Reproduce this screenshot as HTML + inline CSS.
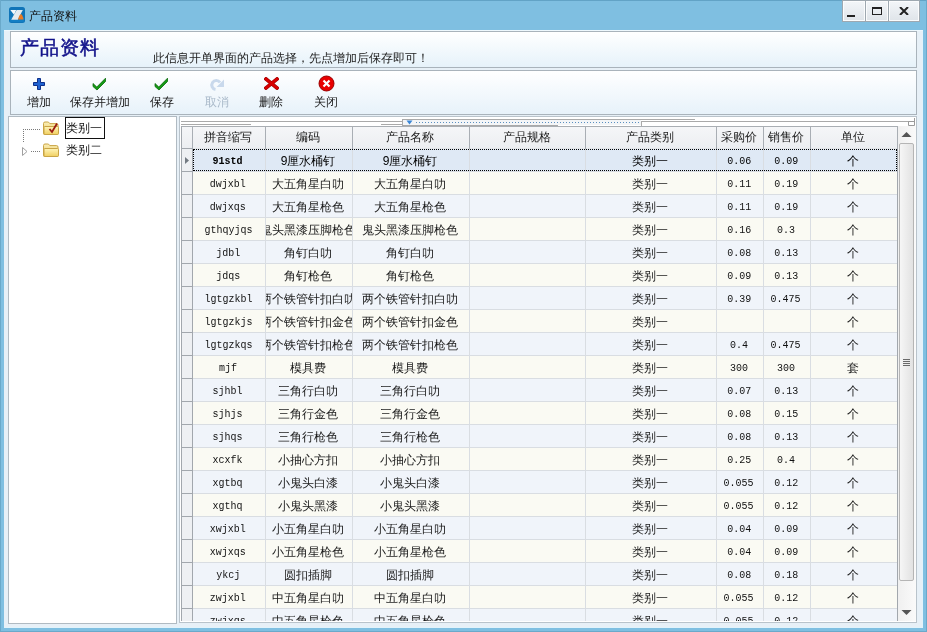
<!DOCTYPE html>
<html><head><meta charset="utf-8">
<style>
*{margin:0;padding:0;box-sizing:border-box}
html,body{width:927px;height:632px;overflow:hidden}
body{position:relative;background:#7fbfe1;font-family:"Liberation Sans",sans-serif;font-size:12px;color:#222}
.a{position:absolute}
#frame-top{left:0;top:0;width:927px;height:1px;background:#62a3c6}
#frame-left{left:0;top:0;width:1px;height:632px;background:#6aa9ca}
#client{left:4px;top:30px;width:919px;height:598px;background:#e7f0f7;box-shadow:inset 0 1px 0 #eef8fd, inset -1px -1px 0 #e2f3fb}
.panel{border:1px solid #a9b3bb}
#hdr{left:10px;top:31px;width:907px;height:37px;background:linear-gradient(#ffffff,#e6f2fa)}
#tb{left:10px;top:70px;width:907px;height:45px;background:linear-gradient(#ffffff,#e7f2fa)}
#tree{left:8px;top:116px;width:169px;height:508px;background:#fff;border-color:#b0bac2}
#gridp{left:179px;top:116px;width:738px;height:507px;background:#fff;border-color:#b9c3cb}
.tbtn{position:absolute;top:96px;font-size:12px;color:#1a1a1a;white-space:nowrap;line-height:12px}
.wbtn{position:absolute;top:1px;height:20px;background:linear-gradient(#f3f6f9,#dfe4e9);box-shadow:inset 0 0 0 1px #fbfcfd}

.hd{background:linear-gradient(#f5f6f8,#eceef1);border-top:1px solid #a9aeb3;border-bottom:1px solid #e2e5e8}
.ht{text-align:center;font-size:12px;line-height:14px;color:#1a1a1a;white-space:nowrap}
.cc{display:flex;justify-content:center;font-size:12px;line-height:14px;color:#1a1a1a;white-space:nowrap;overflow:hidden}
.cm{display:flex;justify-content:center;font-family:"Liberation Mono",monospace;font-size:11px;line-height:14px;color:#111;white-space:nowrap}
.cm span{display:inline-block;transform:scaleX(0.909)}
.b{font-weight:bold}
.k{color:#000}
</style></head><body><div id="wrap" style="position:absolute;left:0;top:0;width:927px;height:632px;will-change:transform">
<div class="a" id="frame-top"></div>
<div class="a" id="frame-left"></div>
<div class="a" style="left:926px;top:0;width:1px;height:632px;background:#6aa9ca"></div>
<div class="a" style="left:0;top:631px;width:927px;height:1px;background:#6aa9ca"></div>
<!-- title -->
<svg class="a" style="left:9px;top:7px" width="16" height="16" viewBox="0 0 16 16">
<rect x="0" y="0" width="16" height="16" rx="2.5" fill="#0f74b8"/>
<rect x="1" y="10" width="14" height="5" rx="1" fill="#1586cc" opacity="0.6"/>
<path d="M1.3 3 H7.2 L5 7.8 Z" fill="#f4f7fa"/>
<path d="M7.6 3 H13.8 L8.8 12.8 H2.2 Z" fill="#e6ebef"/>
<path d="M9 12.6 Q10.5 7 12.2 7.2 Q13.6 7.6 14.6 12.6 Z" fill="#ec7a22"/>
</svg>
<div class="a" style="left:29px;top:9px;font-size:12px;color:#111;line-height:14px">产品资料</div>
<div class="a" style="left:842px;top:0;width:78px;height:22px;background:#9ea8b0"></div>
<div class="wbtn" style="left:843px;width:22px"></div>
<div class="wbtn" style="left:866px;width:22px"></div>
<div class="wbtn" style="left:889px;width:30px"></div>
<div class="a" style="left:847px;top:15px;width:8px;height:2px;background:#222"></div>
<div class="a" style="left:872px;top:7px;width:10px;height:8px;border:1px solid #222;border-top-width:2px"></div>
<svg class="a" style="left:899px;top:7px" width="10" height="8" viewBox="0 0 10 8"><path d="M1 0 L9 8 M9 0 L1 8" stroke="#222" stroke-width="2"/></svg>

<div class="a" id="client"></div>
<div class="a panel" id="hdr"></div>
<div class="a" style="left:20px;top:37px;font-family:'Liberation Serif',serif;font-weight:normal;-webkit-text-stroke:0.5px #12128a;font-size:19px;color:#12128a;line-height:22px;letter-spacing:1px">产品资料</div>
<div class="a" style="left:153px;top:51px;font-size:12px;color:#222;line-height:14px">此信息开单界面的产品选择，先点增加后保存即可！</div>

<div class="a panel" id="tb"></div>

<!-- toolbar icons -->
<svg class="a" style="left:33px;top:78px" width="12" height="12" viewBox="0 0 12 12">
<path d="M4.5 0.5 H7.5 V4.5 H11.5 V7.5 H7.5 V11.5 H4.5 V7.5 H0.5 V4.5 H4.5 Z" fill="#1f63d2" stroke="#0c2f8a" stroke-width="1"/>
</svg>
<svg class="a" style="left:92px;top:77px" width="15" height="14" viewBox="0 0 15 14">
<path d="M1 6.5 L4.8 10 L13.5 1.2 L13.5 4.5 L5 13 L1 9.5 Z" fill="#149a14" stroke="#0a6a0a" stroke-width="0.8"/>
</svg>
<svg class="a" style="left:154px;top:77px" width="15" height="14" viewBox="0 0 15 14">
<path d="M1 6.5 L4.8 10 L13.5 1.2 L13.5 4.5 L5 13 L1 9.5 Z" fill="#149a14" stroke="#0a6a0a" stroke-width="0.8"/>
</svg>
<svg class="a" style="left:209px;top:78px" width="16" height="13" viewBox="0 0 16 13">
<path d="M11 4.5 A4.5 4.5 0 1 0 6.5 11.5" fill="none" stroke="#c9d9ec" stroke-width="3"/>
<path d="M15 1.5 V9 H7.5 Z" fill="#c9d9ec"/>
</svg>
<svg class="a" style="left:264px;top:77px" width="15" height="13" viewBox="0 0 15 13">
<path d="M2 2 L13 11 M13 2 L2 11" stroke="#a00000" stroke-width="3.6" stroke-linecap="square"/>
<path d="M2 2 L13 11 M13 2 L2 11" stroke="#d80000" stroke-width="2.4" stroke-linecap="square"/>
</svg>
<svg class="a" style="left:318px;top:75px" width="17" height="17" viewBox="0 0 17 17">
<circle cx="8.5" cy="8.5" r="7.5" fill="#e80000" stroke="#9a0000" stroke-width="1"/>
<path d="M5.5 5.5 L11.5 11.5 M11.5 5.5 L5.5 11.5" stroke="#fff" stroke-width="2.2"/>
</svg>
<div class="tbtn" style="left:27px">增加</div>
<div class="tbtn" style="left:70px">保存并增加</div>
<div class="tbtn" style="left:150px">保存</div>
<div class="tbtn" style="left:205px;color:#a9b9c9">取消</div>
<div class="tbtn" style="left:259px">删除</div>
<div class="tbtn" style="left:314px">关闭</div>
<div class="a panel" id="tree"></div>
<div class="a panel" id="gridp"></div>
<div class="a" style="left:181px;top:126px;width:717px;height:495px;overflow:hidden">
<div class="a hd" style="left:0;top:0;width:717px;height:23px"></div>
<div class="a" style="left:0;top:0;width:1px;height:495px;background:#a2a7ad"></div>
<div class="a" style="left:1px;top:22px;width:11px;height:1px;background:#a2a7ad"></div>
<div class="a" style="left:1px;top:23px;width:11px;height:472px;background:#eef0f3"></div>
<div class="a" style="left:12px;top:23px;width:704px;height:22px;background:#dfe9f5"></div>
<div class="a" style="left:12px;top:45px;width:704px;height:1px;background:#d9dde2"></div>
<div class="a" style="left:1px;top:45px;width:11px;height:1px;background:#a2a7ad"></div>
<div class="a" style="left:12px;top:46px;width:704px;height:22px;background:#fafaf3"></div>
<div class="a" style="left:12px;top:68px;width:704px;height:1px;background:#d9dde2"></div>
<div class="a" style="left:1px;top:68px;width:11px;height:1px;background:#a2a7ad"></div>
<div class="a" style="left:12px;top:69px;width:704px;height:22px;background:#f0f4fa"></div>
<div class="a" style="left:12px;top:91px;width:704px;height:1px;background:#d9dde2"></div>
<div class="a" style="left:1px;top:91px;width:11px;height:1px;background:#a2a7ad"></div>
<div class="a" style="left:12px;top:92px;width:704px;height:22px;background:#fafaf3"></div>
<div class="a" style="left:12px;top:114px;width:704px;height:1px;background:#d9dde2"></div>
<div class="a" style="left:1px;top:114px;width:11px;height:1px;background:#a2a7ad"></div>
<div class="a" style="left:12px;top:115px;width:704px;height:22px;background:#f0f4fa"></div>
<div class="a" style="left:12px;top:137px;width:704px;height:1px;background:#d9dde2"></div>
<div class="a" style="left:1px;top:137px;width:11px;height:1px;background:#a2a7ad"></div>
<div class="a" style="left:12px;top:138px;width:704px;height:22px;background:#fafaf3"></div>
<div class="a" style="left:12px;top:160px;width:704px;height:1px;background:#d9dde2"></div>
<div class="a" style="left:1px;top:160px;width:11px;height:1px;background:#a2a7ad"></div>
<div class="a" style="left:12px;top:161px;width:704px;height:22px;background:#f0f4fa"></div>
<div class="a" style="left:12px;top:183px;width:704px;height:1px;background:#d9dde2"></div>
<div class="a" style="left:1px;top:183px;width:11px;height:1px;background:#a2a7ad"></div>
<div class="a" style="left:12px;top:184px;width:704px;height:22px;background:#fafaf3"></div>
<div class="a" style="left:12px;top:206px;width:704px;height:1px;background:#d9dde2"></div>
<div class="a" style="left:1px;top:206px;width:11px;height:1px;background:#a2a7ad"></div>
<div class="a" style="left:12px;top:207px;width:704px;height:22px;background:#f0f4fa"></div>
<div class="a" style="left:12px;top:229px;width:704px;height:1px;background:#d9dde2"></div>
<div class="a" style="left:1px;top:229px;width:11px;height:1px;background:#a2a7ad"></div>
<div class="a" style="left:12px;top:230px;width:704px;height:22px;background:#fafaf3"></div>
<div class="a" style="left:12px;top:252px;width:704px;height:1px;background:#d9dde2"></div>
<div class="a" style="left:1px;top:252px;width:11px;height:1px;background:#a2a7ad"></div>
<div class="a" style="left:12px;top:253px;width:704px;height:22px;background:#f0f4fa"></div>
<div class="a" style="left:12px;top:275px;width:704px;height:1px;background:#d9dde2"></div>
<div class="a" style="left:1px;top:275px;width:11px;height:1px;background:#a2a7ad"></div>
<div class="a" style="left:12px;top:276px;width:704px;height:22px;background:#fafaf3"></div>
<div class="a" style="left:12px;top:298px;width:704px;height:1px;background:#d9dde2"></div>
<div class="a" style="left:1px;top:298px;width:11px;height:1px;background:#a2a7ad"></div>
<div class="a" style="left:12px;top:299px;width:704px;height:22px;background:#f0f4fa"></div>
<div class="a" style="left:12px;top:321px;width:704px;height:1px;background:#d9dde2"></div>
<div class="a" style="left:1px;top:321px;width:11px;height:1px;background:#a2a7ad"></div>
<div class="a" style="left:12px;top:322px;width:704px;height:22px;background:#fafaf3"></div>
<div class="a" style="left:12px;top:344px;width:704px;height:1px;background:#d9dde2"></div>
<div class="a" style="left:1px;top:344px;width:11px;height:1px;background:#a2a7ad"></div>
<div class="a" style="left:12px;top:345px;width:704px;height:22px;background:#f0f4fa"></div>
<div class="a" style="left:12px;top:367px;width:704px;height:1px;background:#d9dde2"></div>
<div class="a" style="left:1px;top:367px;width:11px;height:1px;background:#a2a7ad"></div>
<div class="a" style="left:12px;top:368px;width:704px;height:22px;background:#fafaf3"></div>
<div class="a" style="left:12px;top:390px;width:704px;height:1px;background:#d9dde2"></div>
<div class="a" style="left:1px;top:390px;width:11px;height:1px;background:#a2a7ad"></div>
<div class="a" style="left:12px;top:391px;width:704px;height:22px;background:#f0f4fa"></div>
<div class="a" style="left:12px;top:413px;width:704px;height:1px;background:#d9dde2"></div>
<div class="a" style="left:1px;top:413px;width:11px;height:1px;background:#a2a7ad"></div>
<div class="a" style="left:12px;top:414px;width:704px;height:22px;background:#fafaf3"></div>
<div class="a" style="left:12px;top:436px;width:704px;height:1px;background:#d9dde2"></div>
<div class="a" style="left:1px;top:436px;width:11px;height:1px;background:#a2a7ad"></div>
<div class="a" style="left:12px;top:437px;width:704px;height:22px;background:#f0f4fa"></div>
<div class="a" style="left:12px;top:459px;width:704px;height:1px;background:#d9dde2"></div>
<div class="a" style="left:1px;top:459px;width:11px;height:1px;background:#a2a7ad"></div>
<div class="a" style="left:12px;top:460px;width:704px;height:22px;background:#fafaf3"></div>
<div class="a" style="left:12px;top:482px;width:704px;height:1px;background:#d9dde2"></div>
<div class="a" style="left:1px;top:482px;width:11px;height:1px;background:#a2a7ad"></div>
<div class="a" style="left:12px;top:483px;width:704px;height:22px;background:#f0f4fa"></div>
<div class="a" style="left:12px;top:505px;width:704px;height:1px;background:#d9dde2"></div>
<div class="a" style="left:1px;top:505px;width:11px;height:1px;background:#a2a7ad"></div>
<div class="a" style="left:11px;top:23px;width:1px;height:472px;background:#a2a7ad"></div>
<div class="a" style="left:11px;top:1px;width:1px;height:22px;background:#a9aeb4"></div>
<div class="a" style="left:84px;top:23px;width:1px;height:472px;background:#d9dde2"></div>
<div class="a" style="left:84px;top:1px;width:1px;height:22px;background:#a9aeb4"></div>
<div class="a" style="left:171px;top:23px;width:1px;height:472px;background:#d9dde2"></div>
<div class="a" style="left:171px;top:1px;width:1px;height:22px;background:#a9aeb4"></div>
<div class="a" style="left:288px;top:23px;width:1px;height:472px;background:#d9dde2"></div>
<div class="a" style="left:288px;top:1px;width:1px;height:22px;background:#a9aeb4"></div>
<div class="a" style="left:404px;top:23px;width:1px;height:472px;background:#d9dde2"></div>
<div class="a" style="left:404px;top:1px;width:1px;height:22px;background:#a9aeb4"></div>
<div class="a" style="left:535px;top:23px;width:1px;height:472px;background:#d9dde2"></div>
<div class="a" style="left:535px;top:1px;width:1px;height:22px;background:#a9aeb4"></div>
<div class="a" style="left:582px;top:23px;width:1px;height:472px;background:#d9dde2"></div>
<div class="a" style="left:582px;top:1px;width:1px;height:22px;background:#a9aeb4"></div>
<div class="a" style="left:629px;top:23px;width:1px;height:472px;background:#d9dde2"></div>
<div class="a" style="left:629px;top:1px;width:1px;height:22px;background:#a9aeb4"></div>
<div class="a" style="left:716px;top:23px;width:1px;height:472px;background:#a2a7ad"></div>
<div class="a" style="left:716px;top:1px;width:1px;height:22px;background:#a9aeb4"></div>
<div class="a ht" style="left:11px;top:4px;width:72px">拼音缩写</div>
<div class="a ht" style="left:84px;top:4px;width:86px">编码</div>
<div class="a ht" style="left:171px;top:4px;width:116px">产品名称</div>
<div class="a ht" style="left:288px;top:4px;width:115px">产品规格</div>
<div class="a ht" style="left:404px;top:4px;width:130px">产品类别</div>
<div class="a ht" style="left:535px;top:4px;width:46px">采购价</div>
<div class="a ht" style="left:582px;top:4px;width:46px">销售价</div>
<div class="a ht" style="left:629px;top:4px;width:86px">单位</div>
<div class="a cm k b" style="left:12px;top:28px;width:72px;padding-right:2px"><span>91std</span></div>
<div class="a cc k" style="left:85px;top:28px;width:86px;padding-right:2px"><span>9厘水桶钉</span></div>
<div class="a cc k" style="left:172px;top:28px;width:116px;padding-right:2px"><span>9厘水桶钉</span></div>
<div class="a cc k" style="left:405px;top:28px;width:130px;padding-right:2px"><span>类别一</span></div>
<div class="a cm k" style="left:536px;top:28px;width:46px;padding-right:2px"><span>0.06</span></div>
<div class="a cm k" style="left:583px;top:28px;width:46px;padding-right:2px"><span>0.09</span></div>
<div class="a cc k" style="left:630px;top:28px;width:86px;padding-right:2px"><span>个</span></div>
<div class="a cm" style="left:12px;top:51px;width:72px;padding-right:2px"><span>dwjxbl</span></div>
<div class="a cc" style="left:85px;top:51px;width:86px;padding-right:2px"><span>大五角星白叻</span></div>
<div class="a cc" style="left:172px;top:51px;width:116px;padding-right:2px"><span>大五角星白叻</span></div>
<div class="a cc" style="left:405px;top:51px;width:130px;padding-right:2px"><span>类别一</span></div>
<div class="a cm" style="left:536px;top:51px;width:46px;padding-right:2px"><span>0.11</span></div>
<div class="a cm" style="left:583px;top:51px;width:46px;padding-right:2px"><span>0.19</span></div>
<div class="a cc" style="left:630px;top:51px;width:86px;padding-right:2px"><span>个</span></div>
<div class="a cm" style="left:12px;top:74px;width:72px;padding-right:2px"><span>dwjxqs</span></div>
<div class="a cc" style="left:85px;top:74px;width:86px;padding-right:2px"><span>大五角星枪色</span></div>
<div class="a cc" style="left:172px;top:74px;width:116px;padding-right:2px"><span>大五角星枪色</span></div>
<div class="a cc" style="left:405px;top:74px;width:130px;padding-right:2px"><span>类别一</span></div>
<div class="a cm" style="left:536px;top:74px;width:46px;padding-right:2px"><span>0.11</span></div>
<div class="a cm" style="left:583px;top:74px;width:46px;padding-right:2px"><span>0.19</span></div>
<div class="a cc" style="left:630px;top:74px;width:86px;padding-right:2px"><span>个</span></div>
<div class="a cm" style="left:12px;top:97px;width:72px;padding-right:2px"><span>gthqyjqs</span></div>
<div class="a cc" style="left:85px;top:97px;width:86px;padding-right:2px"><span>鬼头黑漆压脚枪色</span></div>
<div class="a cc" style="left:172px;top:97px;width:116px;padding-right:2px"><span>鬼头黑漆压脚枪色</span></div>
<div class="a cc" style="left:405px;top:97px;width:130px;padding-right:2px"><span>类别一</span></div>
<div class="a cm" style="left:536px;top:97px;width:46px;padding-right:2px"><span>0.16</span></div>
<div class="a cm" style="left:583px;top:97px;width:46px;padding-right:2px"><span>0.3</span></div>
<div class="a cc" style="left:630px;top:97px;width:86px;padding-right:2px"><span>个</span></div>
<div class="a cm" style="left:12px;top:120px;width:72px;padding-right:2px"><span>jdbl</span></div>
<div class="a cc" style="left:85px;top:120px;width:86px;padding-right:2px"><span>角钉白叻</span></div>
<div class="a cc" style="left:172px;top:120px;width:116px;padding-right:2px"><span>角钉白叻</span></div>
<div class="a cc" style="left:405px;top:120px;width:130px;padding-right:2px"><span>类别一</span></div>
<div class="a cm" style="left:536px;top:120px;width:46px;padding-right:2px"><span>0.08</span></div>
<div class="a cm" style="left:583px;top:120px;width:46px;padding-right:2px"><span>0.13</span></div>
<div class="a cc" style="left:630px;top:120px;width:86px;padding-right:2px"><span>个</span></div>
<div class="a cm" style="left:12px;top:143px;width:72px;padding-right:2px"><span>jdqs</span></div>
<div class="a cc" style="left:85px;top:143px;width:86px;padding-right:2px"><span>角钉枪色</span></div>
<div class="a cc" style="left:172px;top:143px;width:116px;padding-right:2px"><span>角钉枪色</span></div>
<div class="a cc" style="left:405px;top:143px;width:130px;padding-right:2px"><span>类别一</span></div>
<div class="a cm" style="left:536px;top:143px;width:46px;padding-right:2px"><span>0.09</span></div>
<div class="a cm" style="left:583px;top:143px;width:46px;padding-right:2px"><span>0.13</span></div>
<div class="a cc" style="left:630px;top:143px;width:86px;padding-right:2px"><span>个</span></div>
<div class="a cm" style="left:12px;top:166px;width:72px;padding-right:2px"><span>lgtgzkbl</span></div>
<div class="a cc" style="left:85px;top:166px;width:86px;padding-right:2px"><span>两个铁管针扣白叻</span></div>
<div class="a cc" style="left:172px;top:166px;width:116px;padding-right:2px"><span>两个铁管针扣白叻</span></div>
<div class="a cc" style="left:405px;top:166px;width:130px;padding-right:2px"><span>类别一</span></div>
<div class="a cm" style="left:536px;top:166px;width:46px;padding-right:2px"><span>0.39</span></div>
<div class="a cm" style="left:583px;top:166px;width:46px;padding-right:2px"><span>0.475</span></div>
<div class="a cc" style="left:630px;top:166px;width:86px;padding-right:2px"><span>个</span></div>
<div class="a cm" style="left:12px;top:189px;width:72px;padding-right:2px"><span>lgtgzkjs</span></div>
<div class="a cc" style="left:85px;top:189px;width:86px;padding-right:2px"><span>两个铁管针扣金色</span></div>
<div class="a cc" style="left:172px;top:189px;width:116px;padding-right:2px"><span>两个铁管针扣金色</span></div>
<div class="a cc" style="left:405px;top:189px;width:130px;padding-right:2px"><span>类别一</span></div>
<div class="a cc" style="left:630px;top:189px;width:86px;padding-right:2px"><span>个</span></div>
<div class="a cm" style="left:12px;top:212px;width:72px;padding-right:2px"><span>lgtgzkqs</span></div>
<div class="a cc" style="left:85px;top:212px;width:86px;padding-right:2px"><span>两个铁管针扣枪色</span></div>
<div class="a cc" style="left:172px;top:212px;width:116px;padding-right:2px"><span>两个铁管针扣枪色</span></div>
<div class="a cc" style="left:405px;top:212px;width:130px;padding-right:2px"><span>类别一</span></div>
<div class="a cm" style="left:536px;top:212px;width:46px;padding-right:2px"><span>0.4</span></div>
<div class="a cm" style="left:583px;top:212px;width:46px;padding-right:2px"><span>0.475</span></div>
<div class="a cc" style="left:630px;top:212px;width:86px;padding-right:2px"><span>个</span></div>
<div class="a cm" style="left:12px;top:235px;width:72px;padding-right:2px"><span>mjf</span></div>
<div class="a cc" style="left:85px;top:235px;width:86px;padding-right:2px"><span>模具费</span></div>
<div class="a cc" style="left:172px;top:235px;width:116px;padding-right:2px"><span>模具费</span></div>
<div class="a cc" style="left:405px;top:235px;width:130px;padding-right:2px"><span>类别一</span></div>
<div class="a cm" style="left:536px;top:235px;width:46px;padding-right:2px"><span>300</span></div>
<div class="a cm" style="left:583px;top:235px;width:46px;padding-right:2px"><span>300</span></div>
<div class="a cc" style="left:630px;top:235px;width:86px;padding-right:2px"><span>套</span></div>
<div class="a cm" style="left:12px;top:258px;width:72px;padding-right:2px"><span>sjhbl</span></div>
<div class="a cc" style="left:85px;top:258px;width:86px;padding-right:2px"><span>三角行白叻</span></div>
<div class="a cc" style="left:172px;top:258px;width:116px;padding-right:2px"><span>三角行白叻</span></div>
<div class="a cc" style="left:405px;top:258px;width:130px;padding-right:2px"><span>类别一</span></div>
<div class="a cm" style="left:536px;top:258px;width:46px;padding-right:2px"><span>0.07</span></div>
<div class="a cm" style="left:583px;top:258px;width:46px;padding-right:2px"><span>0.13</span></div>
<div class="a cc" style="left:630px;top:258px;width:86px;padding-right:2px"><span>个</span></div>
<div class="a cm" style="left:12px;top:281px;width:72px;padding-right:2px"><span>sjhjs</span></div>
<div class="a cc" style="left:85px;top:281px;width:86px;padding-right:2px"><span>三角行金色</span></div>
<div class="a cc" style="left:172px;top:281px;width:116px;padding-right:2px"><span>三角行金色</span></div>
<div class="a cc" style="left:405px;top:281px;width:130px;padding-right:2px"><span>类别一</span></div>
<div class="a cm" style="left:536px;top:281px;width:46px;padding-right:2px"><span>0.08</span></div>
<div class="a cm" style="left:583px;top:281px;width:46px;padding-right:2px"><span>0.15</span></div>
<div class="a cc" style="left:630px;top:281px;width:86px;padding-right:2px"><span>个</span></div>
<div class="a cm" style="left:12px;top:304px;width:72px;padding-right:2px"><span>sjhqs</span></div>
<div class="a cc" style="left:85px;top:304px;width:86px;padding-right:2px"><span>三角行枪色</span></div>
<div class="a cc" style="left:172px;top:304px;width:116px;padding-right:2px"><span>三角行枪色</span></div>
<div class="a cc" style="left:405px;top:304px;width:130px;padding-right:2px"><span>类别一</span></div>
<div class="a cm" style="left:536px;top:304px;width:46px;padding-right:2px"><span>0.08</span></div>
<div class="a cm" style="left:583px;top:304px;width:46px;padding-right:2px"><span>0.13</span></div>
<div class="a cc" style="left:630px;top:304px;width:86px;padding-right:2px"><span>个</span></div>
<div class="a cm" style="left:12px;top:327px;width:72px;padding-right:2px"><span>xcxfk</span></div>
<div class="a cc" style="left:85px;top:327px;width:86px;padding-right:2px"><span>小抽心方扣</span></div>
<div class="a cc" style="left:172px;top:327px;width:116px;padding-right:2px"><span>小抽心方扣</span></div>
<div class="a cc" style="left:405px;top:327px;width:130px;padding-right:2px"><span>类别一</span></div>
<div class="a cm" style="left:536px;top:327px;width:46px;padding-right:2px"><span>0.25</span></div>
<div class="a cm" style="left:583px;top:327px;width:46px;padding-right:2px"><span>0.4</span></div>
<div class="a cc" style="left:630px;top:327px;width:86px;padding-right:2px"><span>个</span></div>
<div class="a cm" style="left:12px;top:350px;width:72px;padding-right:2px"><span>xgtbq</span></div>
<div class="a cc" style="left:85px;top:350px;width:86px;padding-right:2px"><span>小鬼头白漆</span></div>
<div class="a cc" style="left:172px;top:350px;width:116px;padding-right:2px"><span>小鬼头白漆</span></div>
<div class="a cc" style="left:405px;top:350px;width:130px;padding-right:2px"><span>类别一</span></div>
<div class="a cm" style="left:536px;top:350px;width:46px;padding-right:2px"><span>0.055</span></div>
<div class="a cm" style="left:583px;top:350px;width:46px;padding-right:2px"><span>0.12</span></div>
<div class="a cc" style="left:630px;top:350px;width:86px;padding-right:2px"><span>个</span></div>
<div class="a cm" style="left:12px;top:373px;width:72px;padding-right:2px"><span>xgthq</span></div>
<div class="a cc" style="left:85px;top:373px;width:86px;padding-right:2px"><span>小鬼头黑漆</span></div>
<div class="a cc" style="left:172px;top:373px;width:116px;padding-right:2px"><span>小鬼头黑漆</span></div>
<div class="a cc" style="left:405px;top:373px;width:130px;padding-right:2px"><span>类别一</span></div>
<div class="a cm" style="left:536px;top:373px;width:46px;padding-right:2px"><span>0.055</span></div>
<div class="a cm" style="left:583px;top:373px;width:46px;padding-right:2px"><span>0.12</span></div>
<div class="a cc" style="left:630px;top:373px;width:86px;padding-right:2px"><span>个</span></div>
<div class="a cm" style="left:12px;top:396px;width:72px;padding-right:2px"><span>xwjxbl</span></div>
<div class="a cc" style="left:85px;top:396px;width:86px;padding-right:2px"><span>小五角星白叻</span></div>
<div class="a cc" style="left:172px;top:396px;width:116px;padding-right:2px"><span>小五角星白叻</span></div>
<div class="a cc" style="left:405px;top:396px;width:130px;padding-right:2px"><span>类别一</span></div>
<div class="a cm" style="left:536px;top:396px;width:46px;padding-right:2px"><span>0.04</span></div>
<div class="a cm" style="left:583px;top:396px;width:46px;padding-right:2px"><span>0.09</span></div>
<div class="a cc" style="left:630px;top:396px;width:86px;padding-right:2px"><span>个</span></div>
<div class="a cm" style="left:12px;top:419px;width:72px;padding-right:2px"><span>xwjxqs</span></div>
<div class="a cc" style="left:85px;top:419px;width:86px;padding-right:2px"><span>小五角星枪色</span></div>
<div class="a cc" style="left:172px;top:419px;width:116px;padding-right:2px"><span>小五角星枪色</span></div>
<div class="a cc" style="left:405px;top:419px;width:130px;padding-right:2px"><span>类别一</span></div>
<div class="a cm" style="left:536px;top:419px;width:46px;padding-right:2px"><span>0.04</span></div>
<div class="a cm" style="left:583px;top:419px;width:46px;padding-right:2px"><span>0.09</span></div>
<div class="a cc" style="left:630px;top:419px;width:86px;padding-right:2px"><span>个</span></div>
<div class="a cm" style="left:12px;top:442px;width:72px;padding-right:2px"><span>ykcj</span></div>
<div class="a cc" style="left:85px;top:442px;width:86px;padding-right:2px"><span>圆扣插脚</span></div>
<div class="a cc" style="left:172px;top:442px;width:116px;padding-right:2px"><span>圆扣插脚</span></div>
<div class="a cc" style="left:405px;top:442px;width:130px;padding-right:2px"><span>类别一</span></div>
<div class="a cm" style="left:536px;top:442px;width:46px;padding-right:2px"><span>0.08</span></div>
<div class="a cm" style="left:583px;top:442px;width:46px;padding-right:2px"><span>0.18</span></div>
<div class="a cc" style="left:630px;top:442px;width:86px;padding-right:2px"><span>个</span></div>
<div class="a cm" style="left:12px;top:465px;width:72px;padding-right:2px"><span>zwjxbl</span></div>
<div class="a cc" style="left:85px;top:465px;width:86px;padding-right:2px"><span>中五角星白叻</span></div>
<div class="a cc" style="left:172px;top:465px;width:116px;padding-right:2px"><span>中五角星白叻</span></div>
<div class="a cc" style="left:405px;top:465px;width:130px;padding-right:2px"><span>类别一</span></div>
<div class="a cm" style="left:536px;top:465px;width:46px;padding-right:2px"><span>0.055</span></div>
<div class="a cm" style="left:583px;top:465px;width:46px;padding-right:2px"><span>0.12</span></div>
<div class="a cc" style="left:630px;top:465px;width:86px;padding-right:2px"><span>个</span></div>
<div class="a cm" style="left:12px;top:488px;width:72px;padding-right:2px"><span>zwjxqs</span></div>
<div class="a cc" style="left:85px;top:488px;width:86px;padding-right:2px"><span>中五角星枪色</span></div>
<div class="a cc" style="left:172px;top:488px;width:116px;padding-right:2px"><span>中五角星枪色</span></div>
<div class="a cc" style="left:405px;top:488px;width:130px;padding-right:2px"><span>类别一</span></div>
<div class="a cm" style="left:536px;top:488px;width:46px;padding-right:2px"><span>0.055</span></div>
<div class="a cm" style="left:583px;top:488px;width:46px;padding-right:2px"><span>0.12</span></div>
<div class="a cc" style="left:630px;top:488px;width:86px;padding-right:2px"><span>个</span></div>
<div class="a" style="left:12px;top:23px;width:704px;height:22px;border:1px dotted #000"></div>
<svg class="a" style="left:4px;top:31px" width="5" height="7" viewBox="0 0 5 7"><path d="M0 0 L4 3.5 L0 7 Z" fill="#737a82"/></svg>
</div>
<!-- grid top strip -->
<div class="a" style="left:181px;top:121px;width:221px;height:1px;background:#a9a9a9"></div>
<div class="a" style="left:641px;top:121px;width:272px;height:1px;background:#a9a9a9"></div>
<div class="a" style="left:181px;top:124px;width:70px;height:1px;background:#a9a9a9"></div>
<div class="a" style="left:381px;top:124px;width:21px;height:1px;background:#a9a9a9"></div>
<div class="a" style="left:402px;top:119px;width:293px;height:1px;background:#a9a9a9"></div>
<div class="a" style="left:402px;top:119px;width:1px;height:7px;background:#a9a9a9"></div>
<div class="a" style="left:403px;top:120px;width:238px;height:5px;background:#f3f5f7"></div>
<div class="a" style="left:402px;top:125px;width:156px;height:1px;background:#a9a9a9"></div>
<div class="a" style="left:641px;top:121px;width:1px;height:5px;background:#a9a9a9"></div>
<svg class="a" style="left:406px;top:120px" width="7" height="5" viewBox="0 0 7 5"><path d="M0.5 0.5 H6.5 L3.5 4.5 Z" fill="#3a86d6"/></svg>
<div class="a" style="left:416px;top:122px;width:223px;height:1px;background:repeating-linear-gradient(90deg,#5a8fc0 0 1px,transparent 1px 3px)"></div>
<svg class="a" style="left:908px;top:118px" width="7" height="8" viewBox="0 0 7 8"><path d="M6.5 0 V7.5 H0.5 V3.5 H6" fill="none" stroke="#9a9a9a" stroke-width="1"/></svg>
<!-- scrollbar -->
<div class="a" style="left:898px;top:126px;width:18px;height:495px;background:linear-gradient(90deg,#f0f0f0,#fafafa)"></div>
<svg class="a" style="left:901px;top:131px" width="11" height="7" viewBox="0 0 11 7"><path d="M0.5 6 L5.5 1 L10.5 6 Z" fill="#555"/></svg>
<svg class="a" style="left:901px;top:609px" width="11" height="7" viewBox="0 0 11 7"><path d="M0.5 1 L5.5 6 L10.5 1 Z" fill="#555"/></svg>
<div class="a" style="left:899px;top:143px;width:15px;height:438px;border:1px solid #b5b5b5;border-radius:2px;background:linear-gradient(90deg,#f6f6f6,#e2e2e2)"></div>
<div class="a" style="left:903px;top:359px;width:7px;height:7px;background:repeating-linear-gradient(180deg,#6a6a6a 0 1px,transparent 1px 2px)"></div>
<!-- tree -->
<div class="a" style="left:23px;top:129px;width:18px;height:1px;background:repeating-linear-gradient(90deg,#7a7a7a 0 1px,transparent 1px 2px)"></div>
<div class="a" style="left:23px;top:130px;width:1px;height:12px;background:repeating-linear-gradient(180deg,transparent 0 1px,#7a7a7a 1px 2px)"></div>
<div class="a" style="left:31px;top:151px;width:10px;height:1px;background:repeating-linear-gradient(90deg,#7a7a7a 0 1px,transparent 1px 2px)"></div>
<svg class="a" style="left:21px;top:146px" width="8" height="11" viewBox="0 0 8 11"><path d="M1.5 1.5 L6 5.5 L1.5 9.5 Z" fill="#fff" stroke="#a0a0a0" stroke-width="1"/></svg>
<svg class="a" style="left:42px;top:121px" width="18" height="15" viewBox="0 0 18 15">
<defs><linearGradient id="fg" x1="0" y1="0" x2="0" y2="1"><stop offset="0" stop-color="#fbefb8"/><stop offset="1" stop-color="#e9c55a"/></linearGradient>
<linearGradient id="ff" x1="0" y1="0" x2="0" y2="1"><stop offset="0" stop-color="#fff4b8"/><stop offset="1" stop-color="#f0cf60"/></linearGradient></defs>
<path d="M1.5 2.5 Q1.5 1 3 1 H5.8 Q6.8 1 7.4 2 L7.8 2.6 H14.5 Q16 2.6 16 4 V12.5 Q16 13.5 15 13.5 H2.5 Q1.5 13.5 1.5 12.5 Z" fill="url(#fg)" stroke="#c9a445" stroke-width="1"/>
<path d="M3 5.5 H15.5 Q16.5 5.5 16.5 6.5 V12.5 Q16.5 13.5 15.5 13.5 H3 Q2 13.5 2 12.5 V6.5 Q2 5.5 3 5.5 Z" fill="url(#ff)" stroke="#c9a445" stroke-width="1"/>
<path d="M7.5 8 L10 11 L15 2.5" fill="none" stroke="#9a1a12" stroke-width="1.8"/>
</svg>
<svg class="a" style="left:42px;top:143px" width="18" height="15" viewBox="0 0 18 15">
<path d="M1.5 2.5 Q1.5 1 3 1 H5.8 Q6.8 1 7.4 2 L7.8 2.6 H14.5 Q16 2.6 16 4 V12.5 Q16 13.5 15 13.5 H2.5 Q1.5 13.5 1.5 12.5 Z" fill="url(#fg)" stroke="#c9a445" stroke-width="1"/>
<path d="M3 5.5 H15.5 Q16.5 5.5 16.5 6.5 V12.5 Q16.5 13.5 15.5 13.5 H3 Q2 13.5 2 12.5 V6.5 Q2 5.5 3 5.5 Z" fill="url(#ff)" stroke="#c9a445" stroke-width="1"/>
</svg>
<div class="a" style="left:65px;top:117px;width:40px;height:22px;border:1px solid #111"></div>
<div class="a" style="left:66px;top:121px;font-size:12px;color:#111;line-height:14px">类别一</div>
<div class="a" style="left:66px;top:143px;font-size:12px;color:#111;line-height:14px">类别二</div>

</div></body></html>
